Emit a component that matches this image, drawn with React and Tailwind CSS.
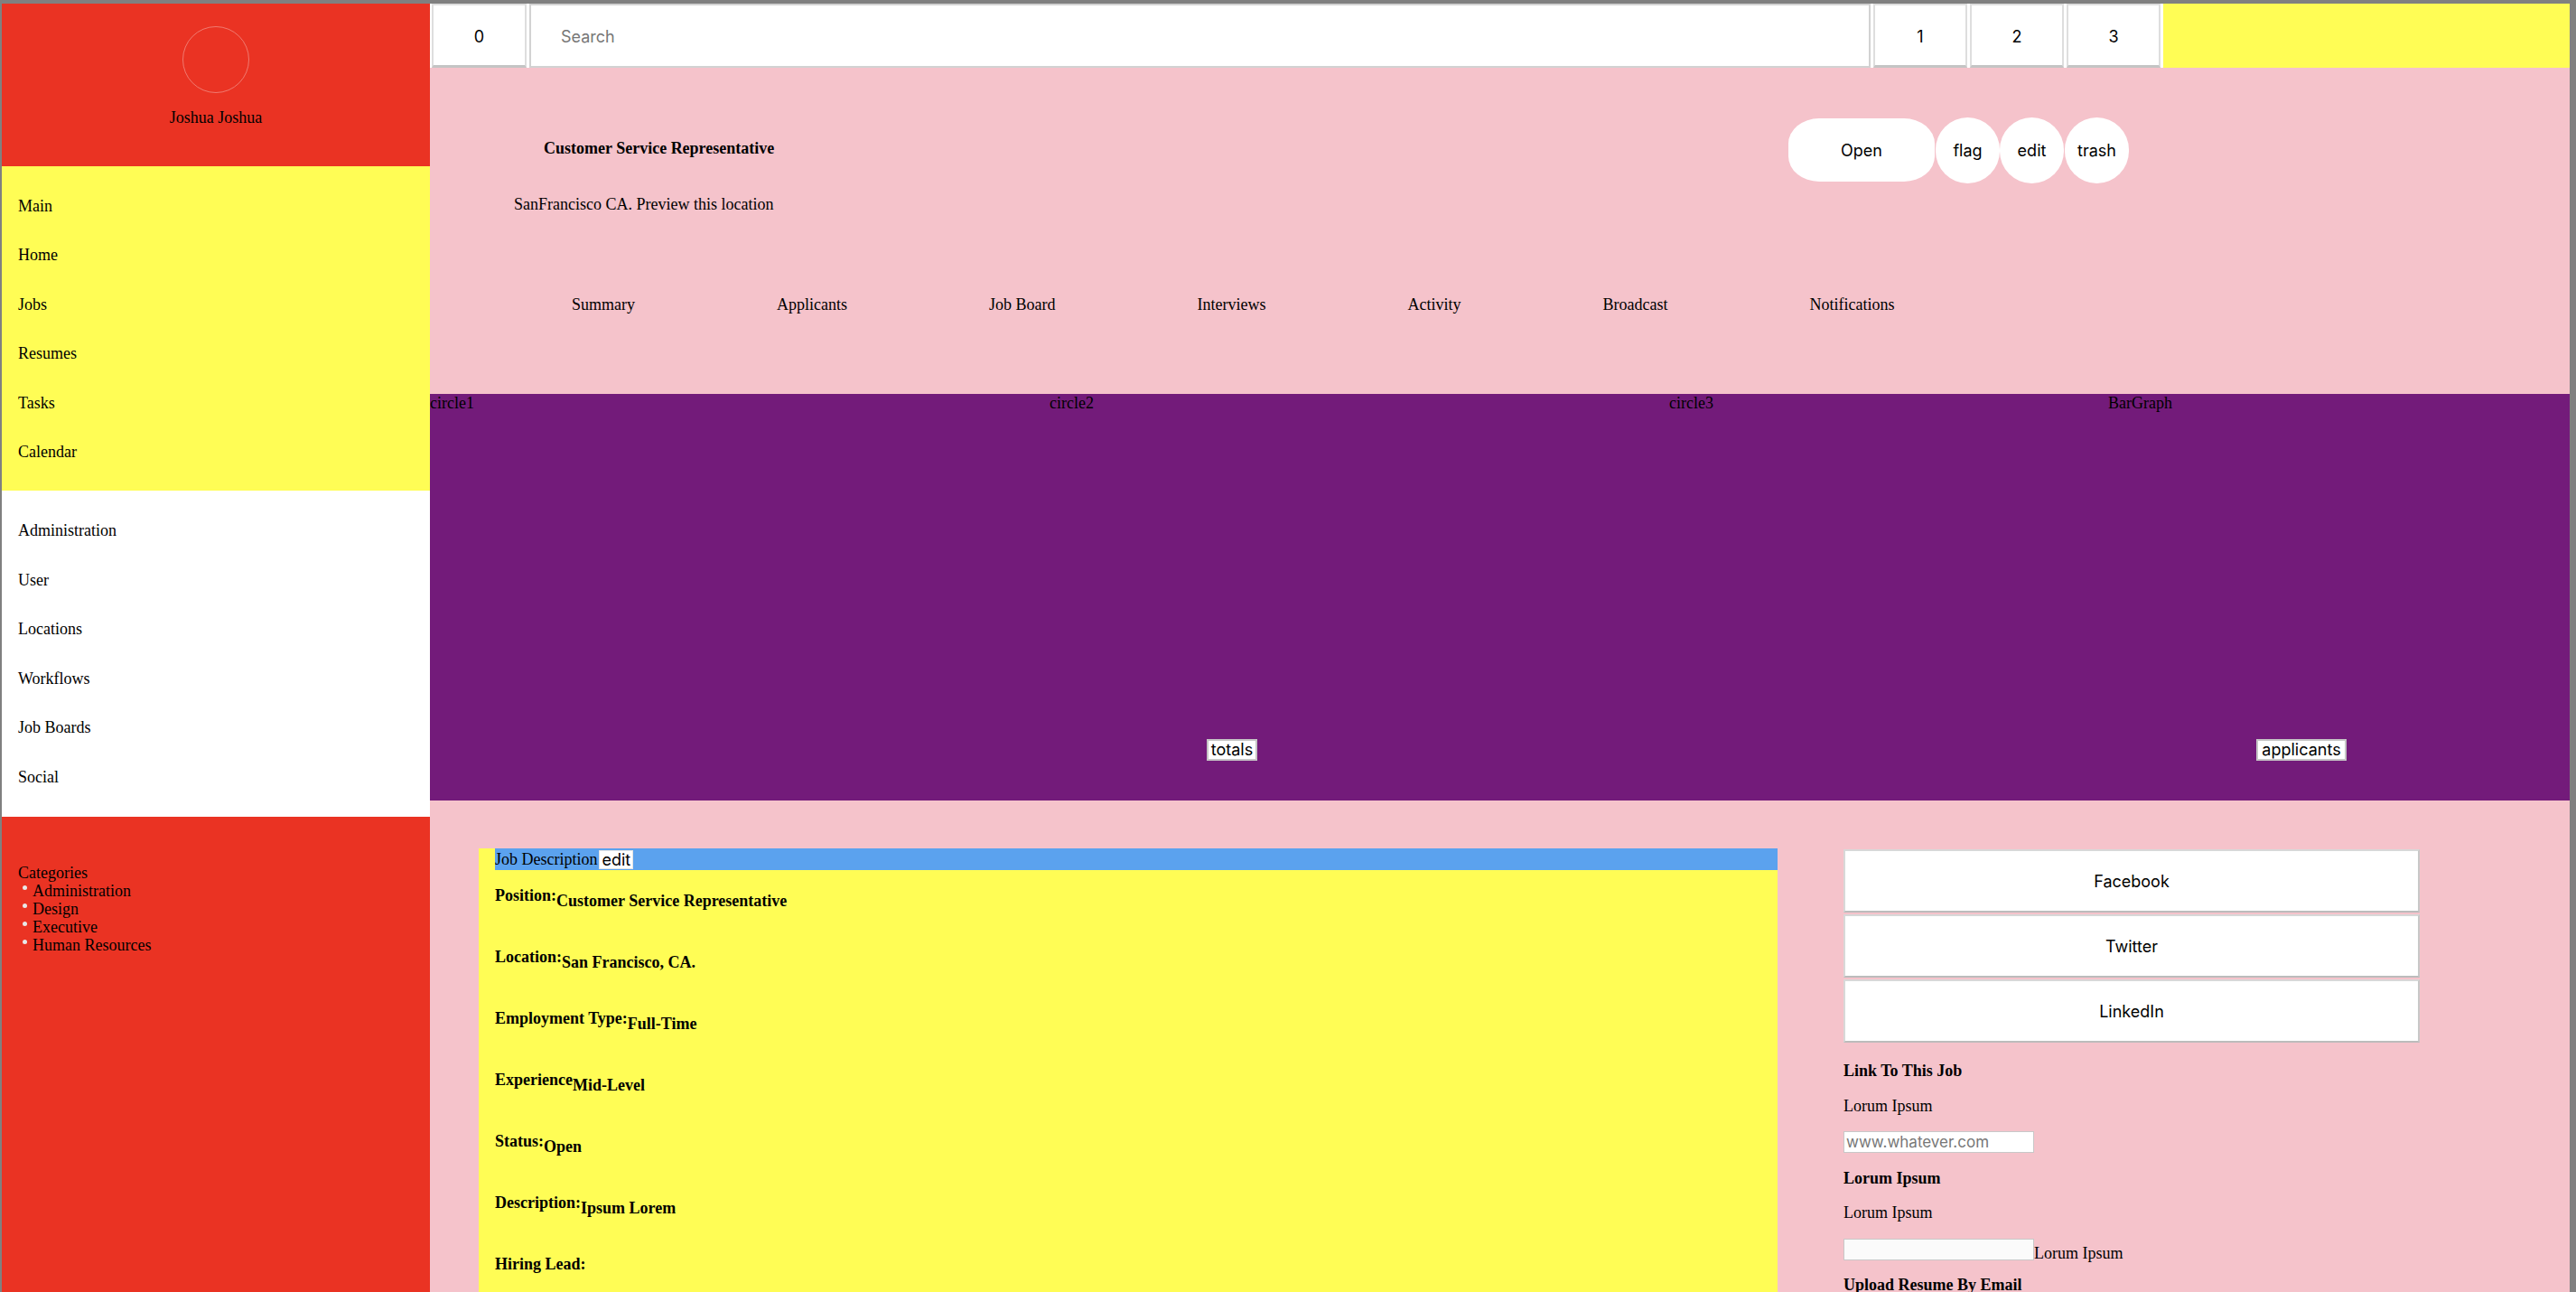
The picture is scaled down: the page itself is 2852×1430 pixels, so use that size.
// App.jsx
const mainNav = ['Main', 'Home', 'Jobs', 'Resumes', 'Tasks', 'Calendar'];
const adminNav = ['Administration', 'User', 'Locations', 'Workflows', 'Job Boards', 'Social'];
const categories = ['Administration', 'Design', 'Executive', 'Human Resources'];
const tabs = ['Summary', 'Applicants', 'Job Board', 'Interviews', 'Activity', 'Broadcast', 'Notifications'];
const details = [
    ['Position:', 'Customer Service Representative'],
    ['Location:', 'San Francisco, CA.'],
    ['Employment Type:', 'Full-Time'],
    ['Experience', 'Mid-Level'],
    ['Status:', 'Open'],
    ['Description:', 'Ipsum Lorem'],
    ['Hiring Lead:', ''],
];

const sans = "font-['Inter',sans-serif]";
const topBtn = `flex w-[104px] items-center justify-center border-2 border-[#dedede] border-b-[3px] border-b-[#c4c4c4] bg-white pt-[2px] text-[18px] ${sans}`;
const socialBtn = `flex h-[70px] items-center justify-center border-2 border-[#d8d8d8] border-b-[#bcbcbc] border-r-[#c8c8c8] bg-white text-[18px] ${sans}`;

function Sidebar() {
    return (
        <aside className="flex w-[474px] shrink-0 flex-col">
            <div className="flex h-[180px] shrink-0 flex-col items-center bg-[#ea3323]">
                <div className="mt-[25px] h-[74px] w-[74px] rounded-full border border-[#f07a70]" />
                <p className="mt-[17px] leading-[21px]">Joshua Joshua</p>
            </div>

            <ul className="h-[359px] shrink-0 bg-[#fffd55] pl-[18px] pt-[17px]">
                {mainNav.map((item) => (
                    <li key={item} className="flex h-[54.5px] items-center">{item}</li>
                ))}
            </ul>

            <ul className="h-[361px] shrink-0 bg-white pl-[18px] pt-[17.5px]">
                {adminNav.map((item) => (
                    <li key={item} className="flex h-[54.5px] items-center">{item}</li>
                ))}
            </ul>

            <div className="flex-1 bg-[#ea3323] pl-[18px] pt-[52px] leading-[20px]">
                <p>Categories</p>
                <ul>
                    {categories.map((item) => (
                        <li key={item} className="flex items-start">
                            <span className="ml-[5px] mr-[6px] mt-[4px] h-[5px] w-[5px] rounded-full bg-[#e8e8e8]" />
                            {item}
                        </li>
                    ))}
                </ul>
            </div>
        </aside>
    );
}

function TopBar() {
    return (
        <div className="flex h-[71px] shrink-0 gap-[3px] bg-white pl-[2px]">
            <div className={`${topBtn} w-[105px]`}>0</div>
            <input
                placeholder="Search"
                className={`w-[1485px] border-2 border-[#d2d2d2] bg-white pl-[33px] pt-[2px] text-[18px] outline-none placeholder:text-[#777] ${sans}`}
            />
            <div className={topBtn}>1</div>
            <div className={topBtn}>2</div>
            <div className={topBtn}>3</div>
            <div className="flex-1 bg-[#fffd55]" />
        </div>
    );
}

function JobHeader() {
    return (
        <div className="h-[361px] shrink-0 bg-[#f5c3cb] pt-[55px]">
            <div className="flex h-[72px] items-center">
                <div className="w-[1504px] self-start pl-[126px] pt-[24px] font-bold leading-[21px]">
                    Customer Service Representative
                </div>
                <div className={`flex items-center text-[18px] ${sans}`}>
                    <button className="h-[70px] w-[162px] rounded-[34px/28px] bg-white">Open</button>
                    <button className="ml-[1px] h-[73px] w-[71px] rounded-full bg-white">flag</button>
                    <button className="h-[73px] w-[71px] rounded-full bg-white">edit</button>
                    <button className="ml-[1px] h-[73px] w-[71px] rounded-full bg-white">trash</button>
                </div>
            </div>
            <p className="mt-[14px] pl-[93px] leading-[21px]">SanFrancisco CA. Preview this location</p>
            <ul className="mt-[90px] flex leading-[21px]">
                {tabs.map((tab) => (
                    <li key={tab} className="ml-[157px]">{tab}</li>
                ))}
            </ul>
        </div>
    );
}

function Stats() {
    const label = `h-[24px] border-2 border-[#c6c6c6] bg-white text-center text-[18px] leading-[20px] ${sans}`;
    return (
        <div className="flex h-[450px] shrink-0 bg-[#731b7a] leading-[21px]">
            <div className="w-[686px]">circle1</div>
            <div className="flex w-[686px] flex-col">
                <span>circle2</span>
                <div className={`${label} ml-[174px] mb-[44px] mt-auto w-[56px]`}>totals</div>
            </div>
            <div className="w-[486px]">circle3</div>
            <div className="flex flex-1 flex-col">
                <span>BarGraph</span>
                <div className={`${label} ml-[164px] mb-[44px] mt-auto w-[100px]`}>applicants</div>
            </div>
        </div>
    );
}

function JobDescription() {
    return (
        <div className="ml-[54px] mt-[53px] w-[1438px] shrink-0 bg-[#fffd55] pl-[18px]">
            <div className="flex h-[24px] items-center bg-[#5ba2ee] leading-[21px]">
                <span>Job Description</span>
                <span className={`ml-[2px] h-[21px] border border-[#e4e4e4] bg-white px-[2px] text-[18px] leading-[20px] ${sans}`}>edit</span>
            </div>
            <div className="pt-[18px]">
                {details.map(([k, v]) => (
                    <div key={k} className="flex h-[68px] items-start font-bold leading-[21px]">
                        <span>{k}</span>
                        {v && <span className="mt-[6px]">{v}</span>}
                    </div>
                ))}
            </div>
        </div>
    );
}

function ShareColumn() {
    return (
        <div className="ml-[73px] mt-[54px] w-[638px] shrink-0">
            <div className="flex flex-col gap-[2px]">
                <div className={socialBtn}>Facebook</div>
                <div className={socialBtn}>Twitter</div>
                <div className={socialBtn}>LinkedIn</div>
            </div>
            <div className="mt-[21px] flex flex-col gap-[17.5px] leading-[21px]">
                <h4 className="font-bold">Link To This Job</h4>
                <p>Lorum Ipsum</p>
                <input
                    placeholder="www.whatever.com"
                    className={`h-[24px] w-[211px] border border-[#c8c8c8] bg-white px-[2px] text-[17px] outline-none placeholder:text-[#777] ${sans}`}
                />
                <h4 className="font-bold">Lorum Ipsum</h4>
                <p>Lorum Ipsum</p>
                <div className="flex items-end">
                    <input className="h-[24px] w-[211px] border border-[#c8c8c8] bg-[#fbfbfb] outline-none" />
                    <span className="mb-[-3px]">Lorum Ipsum</span>
                </div>
                <h4 className="font-bold">Upload Resume By Email</h4>
            </div>
        </div>
    );
}

export default function App() {
    return (
        <div className="flex h-[1430px] overflow-hidden bg-[#808080] pl-[2px] pr-[7px] pt-[4px] font-['Liberation_Serif',serif] text-[18px] text-black">
            <Sidebar />
            <main className="flex min-w-0 flex-1 flex-col">
                <TopBar />
                <JobHeader />
                <Stats />
                <div className="flex min-h-0 flex-1 items-start overflow-hidden bg-[#f5c3cb]">
                    <JobDescription />
                    <ShareColumn />
                </div>
            </main>
        </div>
    );
}
